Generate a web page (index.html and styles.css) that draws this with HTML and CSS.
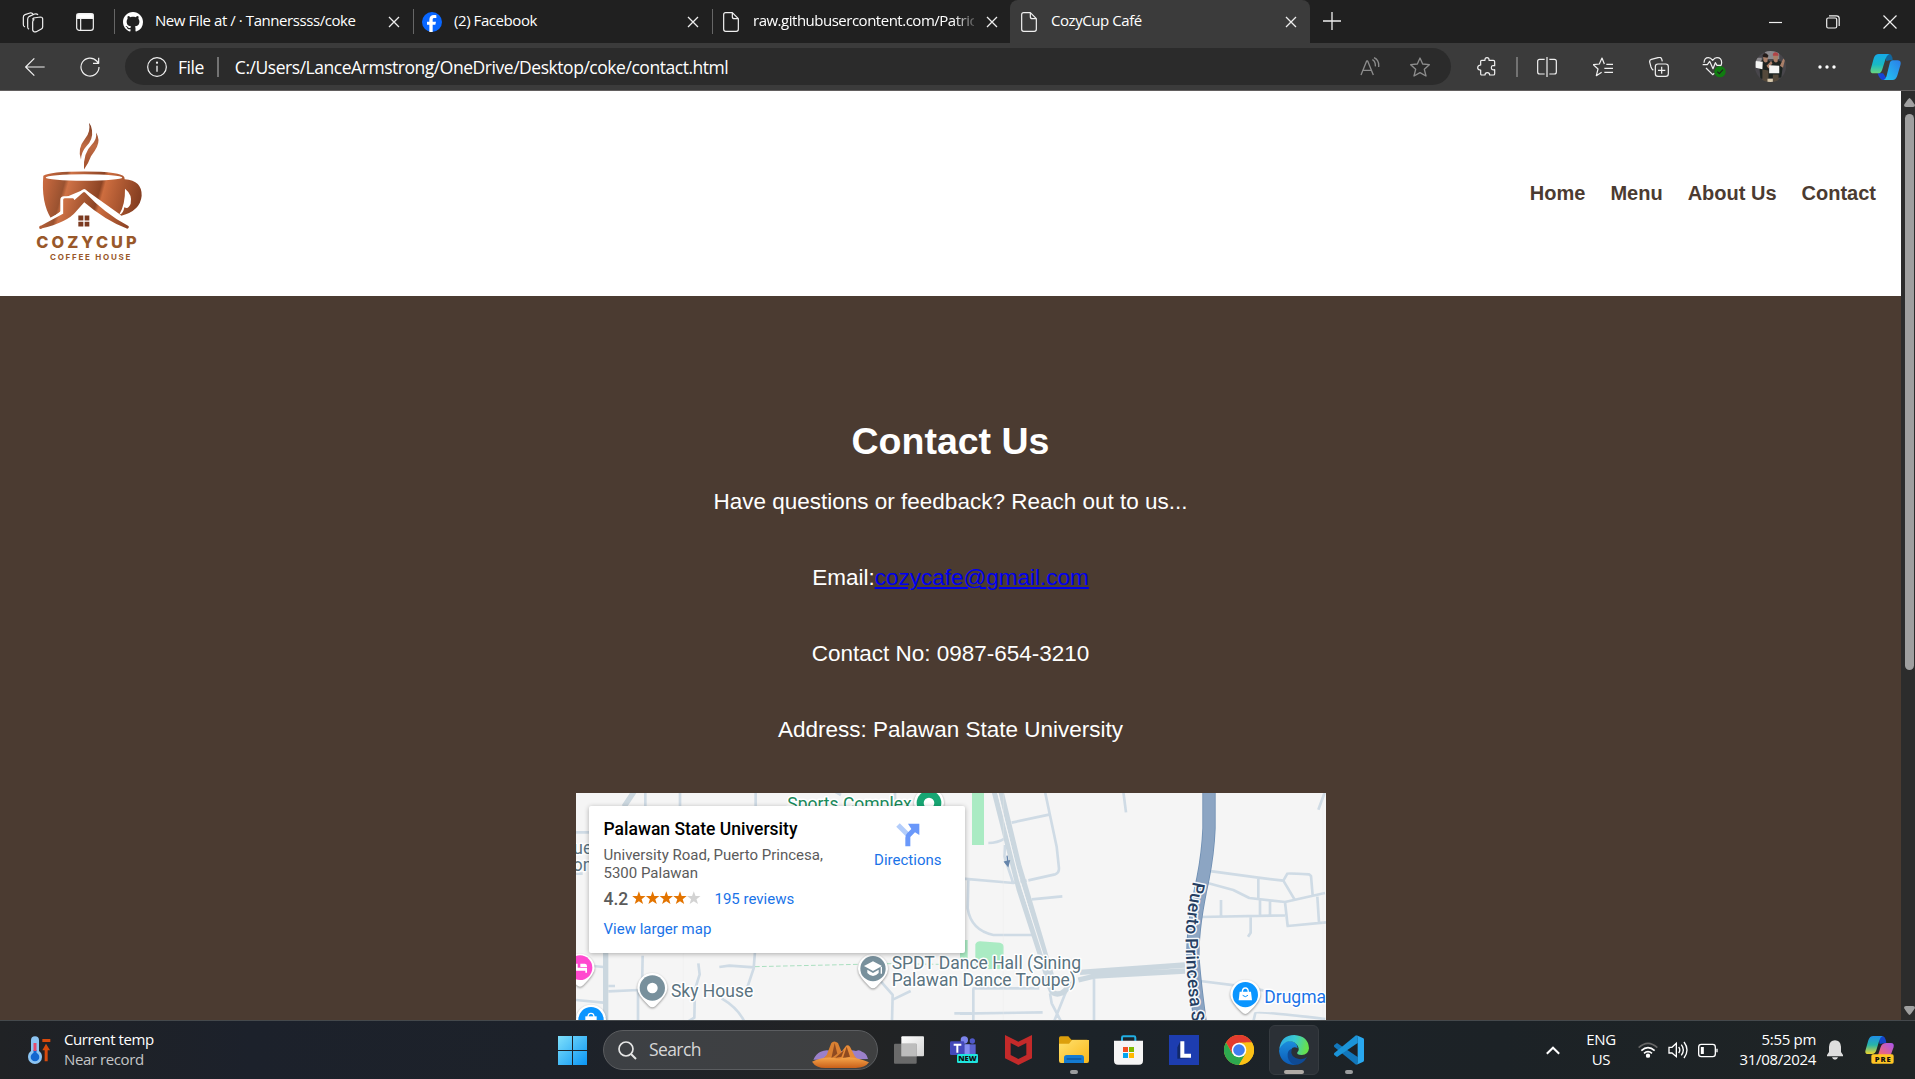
FILE: index.html
```html
<!DOCTYPE html>
<html lang="en">
<head>
<meta charset="utf-8">
<title>CozyCup Café</title>
<link rel="stylesheet" href="styles.css">
</head>
<body>
<div class="tabstrip">
  <div class="tabstrip-tools">
    <svg width="24" height="24" viewBox="62 26 72 72" class="line"><path d="M96 54l4-4 20-3q7 0 7 6v24q0 4-4 6l-15 8q-9 3-11-5V62q0-6 5-8M86 84q-5-3-4-8V54q0-6 5-9l16-7q7-2 10 3M74 77q-6-2-5-8V48q0-6 5-8l15-5q7-1 9 4"/></svg>
    <svg width="18" height="18" viewBox="0 0 54 54" class="line"><rect x="2" y="2" width="50" height="50" rx="8"/><path d="M14 17v34"/><path d="M3 3h48v13H3z" fill="#fff"/></svg>
  </div>
  <div class="tab">
    <svg class="favicon" width="20" height="20" viewBox="0 0 16 16"><path fill="#fff" d="M8 0C3.58 0 0 3.58 0 8c0 3.54 2.29 6.53 5.47 7.59.4.07.55-.17.55-.38 0-.19-.01-.82-.01-1.49-2.01.37-2.53-.49-2.69-.94-.09-.23-.48-.94-.82-1.13-.28-.15-.68-.52-.01-.53.63-.01 1.08.58 1.23.82.72 1.21 1.87.87 2.33.66.07-.52.28-.87.51-1.07-1.78-.2-3.64-.89-3.64-3.95 0-.87.31-1.59.82-2.15-.08-.2-.36-1.02.08-2.12 0 0 .67-.21 2.2.82.64-.18 1.32-.27 2-.27s1.36.09 2 .27c1.53-1.04 2.2-.82 2.2-.82.44 1.1.16 1.92.08 2.12.51.56.82 1.27.82 2.15 0 3.07-1.87 3.75-3.65 3.95.29.25.54.73.54 1.48 0 1.07-.01 1.93-.01 2.2 0 .21.15.46.55.38A8.01 8.01 0 0016 8c0-4.42-3.58-8-8-8z"/></svg>
    <span class="tab-title">New File at / · Tannerssss/coke</span>
    <svg class="tab-close" width="12" height="12" viewBox="0 0 12 12"><path d="M1 1l10 10M11 1L1 11"/></svg>
  </div>
  <div class="tab">
    <svg class="favicon" width="20" height="20" viewBox="0 0 60 60"><circle cx="30" cy="30" r="30" fill="#0866ff"/><path fill="#fff" d="M22 60V38h-7v-9h7v-5c0-10 5-15 14-15 3 0 5 0 7 1v8h-5c-5 0-6 2-6 6v5h10l-2 9h-8v22z"/></svg>
    <span class="tab-title">(2) Facebook</span>
    <svg class="tab-close" width="12" height="12" viewBox="0 0 12 12"><path d="M1 1l10 10M11 1L1 11"/></svg>
  </div>
  <div class="tab">
    <svg class="favicon line" width="20" height="20" viewBox="0 0 60 60"><path d="M14 2h20l18 18v32q0 6-6 6H14q-6 0-6-6V8q0-6 6-6zM34 2v12q0 6 6 6h12"/></svg>
    <span class="tab-title tab-title-faded">raw.githubusercontent.com/Patric</span>
    <svg class="tab-close" width="12" height="12" viewBox="0 0 12 12"><path d="M1 1l10 10M11 1L1 11"/></svg>
  </div>
  <div class="tab tab-active">
    <svg class="favicon line" width="20" height="20" viewBox="0 0 60 60"><path d="M14 2h20l18 18v32q0 6-6 6H14q-6 0-6-6V8q0-6 6-6zM34 2v12q0 6 6 6h12"/></svg>
    <span class="tab-title">CozyCup Café</span>
    <svg class="tab-close" width="12" height="12" viewBox="0 0 12 12"><path d="M1 1l10 10M11 1L1 11"/></svg>
  </div>
  <svg class="new-tab" width="18" height="18" viewBox="0 0 18 18"><path d="M9 0v18M0 9h18"/></svg>
  <div class="window-controls">
    <svg width="13" height="14" viewBox="0 0 13 14"><path d="M0 7.5h13"/></svg>
    <svg width="14" height="14" viewBox="0 0 14 14"><rect x=".7" y="3" width="10" height="10" rx="1.5"/><path d="M3 .8h7.500q2.700 0 2.700 2.700V11"/></svg>
    <svg width="14" height="14" viewBox="0 0 14 14"><path d="M.5.5l13 13M13.500.5l-13 13"/></svg>
  </div>
</div>

<div class="toolbar">
  <div class="nav-buttons">
    <svg width="20" height="20" viewBox="0 0 60 60" class="line"><path d="M59 30H3M28 4L2 30l26 26"/></svg>
    <svg width="20" height="20" viewBox="0 0 60 60" class="line"><path d="M57 30a27 27 0 1 1-7-18l5 6M56 2v17H39"/></svg>
  </div>
  <div class="address-bar">
    <svg width="20" height="20" viewBox="0 0 60 60" class="line"><circle cx="30" cy="30" r="28"/><path d="M30 26v18" stroke-width="4"/><circle cx="30" cy="17" r="1.500" fill="#fff"/></svg>
    <span class="scheme">File</span>
    <span class="divider"></span>
    <span class="url">C:/Users/LanceArmstrong/OneDrive/Desktop/coke/contact.html</span>
    <svg class="read-aloud" width="20" height="20" viewBox="0 0 60 60"><path d="M3 54L20 12h3l17 42M9 40h25M37 8q10 5 9 20M42 2q16 7 14 28"/></svg>
    <svg class="star" width="20" height="20" viewBox="0 0 60 60"><path d="M30 3l8 18 20 2-15 14 5 20-18-10-18 10 5-20L2 23l20-2z"/></svg>
  </div>
  <div class="actions">
    <svg width="20" height="20" viewBox="0 0 60 60" class="line"><path d="M14 10h10q-1-8 6-8t6 8h13q4 0 4 4v12q-10-2-10 6t10 6v12q0 4-4 4H38q0-7-7-7t-7 7H14q-3 0-3-4V39q-9 0-9-7t9-8V13q0-3 3-3z"/></svg>
    <span class="divider"></span>
    <svg width="20" height="20" viewBox="0 0 60 60" class="line"><path d="M23 7H8q-6 0-6 6v32q0 6 6 6h15M37 7h15q6 0 6 6v32q0 6-6 6H37M30 0v60"/></svg>
    <svg width="20" height="20" viewBox="0 0 60 60" class="line"><path d="M34 21l-7-18-8 18-18 2 14 13-5 20 16-10M40 22h20M34 34h26M34 46h26"/></svg>
    <svg width="20" height="20" viewBox="0 0 60 60" class="line"><rect x="19" y="21" width="39" height="37" rx="8"/><path d="M38 29v21M27 40h22M13 40Q8 36 6 30L2 15q-1-6 5-8l23-6q6-1 8 5l2 7"/></svg>
    <svg width="24" height="22" viewBox="0 0 72 66" class="line"><path d="M6 20Q7 5 19 5q7 0 13 8 6-8 13-8 14 0 14 15 0 8-6 14M12 36l20 20 5-4M2 26h14l7-10 10 22 7-18 5 8h12"/><circle cx="54" cy="47" r="17" fill="#107c10" stroke="none"/><path d="M46 47l6 6 11-12" stroke="#202020"/></svg>
    <svg width="31" height="31" viewBox="0 0 92 92"><clipPath id="avatar"><circle cx="46" cy="46" r="46"/></clipPath><g clip-path="url(#avatar)"><path fill="#48464b" d="M0 0h92v92H0z"/><path fill="#8c8a8e" d="M30 0h42v24H30zM0 20h20v14H0z"/><path fill="#1d2320" d="M12 35l18-16 16 14 14-10 24 12-6 44-62 3z"/><path fill="#a97f68" d="M24 12q9-6 15 2l-2 18q-8 6-12-3zM54 12q8-8 15 2l-2 18q-8 5-12-4zM34 44l14-14 4 6-12 16zM74 44l10-22 5 4-6 24z"/><path fill="#241c1a" d="M22 14q8-14 18 0l-3 6-13-2z"/><path fill="#b24447" d="M53 8q8-8 16 0l1 6H53z"/><path fill="#f4f5f3" d="M1 30l22 2-1 22-20-4zM42 42l30 2v22H42z"/><path fill="#54493a" d="M22 55l18 3v34H22zM53 70h17v22H53z"/><path fill="#d8c9ac" d="M37 82h16v10H37z"/></g></svg>
    <svg width="18" height="6" viewBox="0 0 18 6" fill="#fff"><circle cx="2" cy="3" r="1.700"/><circle cx="9" cy="3" r="1.700"/><circle cx="16" cy="3" r="1.700"/></svg>
    <svg width="31" height="28" viewBox="0 0 92 84"><defs><linearGradient id="cpa" x1="0" y1="0" x2="0" y2="1"><stop offset="0" stop-color="#16a9e8"/><stop offset=".55" stop-color="#18b9c4"/><stop offset="1" stop-color="#6ad67e"/></linearGradient><linearGradient id="cpb" x1="0" y1="1" x2="1" y2="0"><stop offset="0" stop-color="#22c9f2"/><stop offset="1" stop-color="#2b7de8"/></linearGradient></defs><path fill="#12669c" d="M45 3h12q8 0 11 17l-20 4z"/><path fill="#1744d4" d="M22 61h17l13 20H38q-9 0-16-20z"/><path fill="url(#cpa)" d="M26 3h31q-8 4-11 15L36 50q-3 11-13 11H10Q-2 61 2 47l9-32Q15 3 26 3z"/><path fill="url(#cpb)" d="M68 22h14q12 0 9 13l-9 31q-4 15-15 15H40q7-3 9-11l9-37q2-11 10-11z"/></svg>
  </div>
</div>

<div class="viewport">
  <div class="page">
    <header class="site-header">
      <svg class="logo" width="140" height="160" viewBox="0 10.5 420 480">
        <defs>
          <linearGradient id="cup" gradientUnits="userSpaceOnUse" x1="62" y1="250" x2="350" y2="330"><stop offset="0" stop-color="#c8693f"/><stop offset=".2" stop-color="#9a5230"/><stop offset=".24" stop-color="#cf7246"/><stop offset=".56" stop-color="#8c4424"/><stop offset=".6" stop-color="#cd6d3f"/><stop offset="1" stop-color="#7f3a1e"/></linearGradient>
          <linearGradient id="steam" x1="0" y1="0" x2="0" y2="1"><stop offset="0" stop-color="#7c3a20"/><stop offset=".5" stop-color="#c06c44"/><stop offset="1" stop-color="#a04d2a"/></linearGradient>
        </defs>
        <path fill="url(#steam)" d="M207 37q6 27-12 48-24 30-12 62 1-23 15-38 22-22 18-50-2-14-9-22zM228 66q4 19-13 37-26 25-23 74 13-18 21-40 13-17 18-28 10-22-3-43z"/>
        <path fill="url(#cup)" d="M70 196q18-13 123-13 112 0 120 17l1 6q53 4 51 50-4 45-61 60l-7-6-103-74-66 28v34l-35 26Q63 276 70 196z"/>
        <ellipse cx="192" cy="201" rx="115" ry="10" fill="#fff"/>
        <path fill="#fff" d="M315 235q23 18 17 45-7 18-19 10-3 20-15 22 18-30 17-77z"/>
        <path fill="#fff" d="M90 365l102-100 105 90z"/>
        <path id="roof" d="M60 351l72-39v-44h26v11l34-31q60 64 132 102-66-22-132-80l-28 32q-24 30-104 49z" fill="none" stroke="#fff" stroke-width="22" stroke-linejoin="round"/>
        <path d="M62 351l72-39v-44h24v11l34-30q60 64 130 101-64-24-130-81l-28 32q-24 30-102 49z" fill="url(#cup)" stroke="url(#cup)" stroke-width="9" stroke-linejoin="round"/>
        <path fill="#7b3a20" d="M175 315h15v15h-15zM194 315h14v15h-14zM175 334h15v14h-15zM194 334h14v14h-14z"/>
        <text x="49" y="413" textLength="301" class="logo-name">COZYCUP</text>
        <text x="90" y="447" textLength="241" class="logo-sub">COFFEE HOUSE</text>
      </svg>
      <nav class="site-nav"><a>Home</a><a>Menu</a><a>About Us</a><a>Contact</a></nav>
    </header>
    <main class="contact">
      <h1>Contact Us</h1>
      <p>Have questions or feedback? Reach out to us...</p>
      <p>Email:<a href="mailto:cozycafe@gmail.com">cozycafe@gmail.com</a></p>
      <p>Contact No: 0987-654-3210</p>
      <p>Address: Palawan State University</p>
      <div class="map">
        <svg width="750" height="227" viewBox="576 793 750 227">
          <path fill="#f5f5f5" d="M576 793h750v227H576z"/>
          <!-- eastern half -->
          <g transform="translate(960 785) scale(.33333)">
            <path fill="#aaebc3" d="M36 20h36v160H36zM0 465h23v55H0zM46 478q4-9 14-9l60 4q11 3 11 13v66H46z"/>
            <g class="road"><path d="M255 20l35 165 7 65q0 15-12 18l-80 18M155 113l112-24M85 174q27 0 50-14M0 280l160 14 40-7M25 285l-2 85q10 65 77 80h120M215 343l92-9M490 20l8 62M1095 20l-20 54M740 257l155 21 75 9 12-21q3-2 65 2l6 5 5 58M740 293l80 22 48 24 107 12 120-27M720 396l255-5M970 287l34 57M895 280v60M900 342v50M930 350v42M783 345v47M872 395v48l-8 12M975 351l8 72 115-11M1072 335l5 77M720 588l105 13 85 15M38 610h200M40 610v100M0 686l248-4M402 580v130M270 625l5 30 28 54M322 610l-40 100M880 710l6-26q3-6 210 18M135 180l-2 35 27 80"/></g>
            <path class="avenue" d="M103 20l75 295 67 205 25 85M123 20l53 220 67 225 35 120M360 562l315-22M355 585l50-12 270-15M267 580q0 47 25 47 28 0 40-41"/>
            <path d="M112 20l66 265 74 232" fill="none" stroke="#f5f5f5" stroke-width="3"/>
            <path d="M747 20v110q-3 75-18 150-33 150-30 240 5 70 22 195" fill="none" stroke="#6f8fb3" stroke-width="40"/>
            <path d="M747 20v110q-3 75-18 150-33 150-30 240 5 70 22 195" fill="none" stroke="#8ca5c3" stroke-width="35"/>
            <path d="M141 212l3 20M134 231l14-3-4 15z" stroke="#6685ab" stroke-width="4" fill="#6685ab"/>
            <path stroke="#e9eaec" d="M130 20v690M1089 20v690" fill="none"/>
            <path id="highway" d="M699 289Q675 400 677 480Q679 590 700 730" fill="none"/>
            <text class="highway-label"><textPath href="#highway">Puerto Princesa S</textPath></text>
          </g>
          <!-- western half -->
          <g transform="translate(570 785) scale(.33333)">
            <g class="road"><path d="M226 20v60M330 20v60M557 20v60M795 20l18 10M18 142h60M18 266h20M218 512l-2 100-12 10v90M115 619l90-4M115 603h20M70 543l30 3M18 645l82 8M385 535l4 33-14 45-2 85-20 12M448 546l30-4 75 5M555 500l-4 50-20 60M455 640q50 30 68 70M920 575l48 55-2 80M970 643l52-25M1153 685h50M975 20v30"/></g>
            <path class="avenue" d="M192 20l-30 45M107 500v210"/>
            <path d="M555 545l310-7M950 536l160 2" fill="none" stroke="#aadfc0" stroke-width="3" stroke-dasharray="14 7"/>
            <path stroke="#e9eaec" d="M340 500v220"/>
            <g class="map-label">
              <text x="652" y="76" fill="#188a5b">Sports Complex</text>
              <text x="10" y="207">ue</text><text x="8" y="258">on</text>
              <text x="303" y="636">Sky House</text>
              <text x="965" y="552">SPDT Dance Hall (Sining</text>
              <text x="965" y="604">Palawan Dance Troupe)</text>
              <text x="2083" y="654" fill="#1a73e8">Drugma</text>
            </g>
            <g class="pin"><path d="M1032 54a45 45 0 1 1 90 0q0 25-45 65-45-40-45-65z"/><path d="M-14 550a44 44 0 1 1 88 0q0 17-34 50-10 10-20 0-34-33-34-50z"/><path d="M202 609a45 45 0 1 1 90 0q0 20-35 53-10 10-20 0-35-33-35-53z"/><path d="M864 552a45 45 0 1 1 90 0q0 20-35 53-10 10-20 0-35-33-35-53z"/><path d="M18 704a45 45 0 1 1 90 0v30H18z"/><path d="M1981 629a45 45 0 1 1 90 0q0 20-35 53-10 10-20 0-35-33-35-53z"/></g>
            <circle cx="1077" cy="54" r="37" fill="#17a673"/><circle cx="1077" cy="54" r="16" fill="#fff"/>
            <circle cx="30" cy="548" r="37" fill="#ff49cf"/><path fill="#fff" d="M18 536h5v12h28v15h-5v-6H18zM31 536h14q7 1 6 10H31z"/>
            <circle cx="247" cy="609" r="38" fill="#78909c"/><circle cx="247" cy="609" r="16" fill="#fff"/>
            <circle cx="909" cy="551" r="38" fill="#78909c"/><path fill="#fff" d="M909 529l27 14-27 15-27-15zM892 554l17 10 17-10v10q-17 18-34 0zM932 546h4v20h-4z"/>
            <circle cx="63" cy="704" r="38" fill="#0a95ff"/><path fill="#fff" d="M46 694h34v24H46z"/><path d="M54 696q0-11 9-11t9 11" fill="none" stroke="#fff" stroke-width="4"/>
            <circle cx="2026" cy="629" r="38" fill="#0a95ff"/><path fill="#fff" d="M2009 620h34l3 26h-40z"/><path d="M2017 622q0-13 9-13t9 13" fill="none" stroke="#fff" stroke-width="4"/><path d="M2018 631q8 8 16 0" fill="none" stroke="#0a95ff" stroke-width="3"/>
          </g>
        </svg>
        <div class="place-card">
          <div class="place-info">
            <div class="place-name">Palawan State University</div>
            <div class="place-address">University Road, Puerto Princesa,<br>5300 Palawan</div>
            <div class="rating"><b>4.2</b>
              <svg width="69" height="14" viewBox="0 0 69 14"><defs><path id="rate" d="M6.900.3l1.700 4.700 5 .1-4 3.100 1.500 4.900-4.200-2.900-4.200 2.900 1.500-4.900-4-3.100 5-.1z"/></defs><g fill="#e37400"><use href="#rate"/><use href="#rate" x="13.700"/><use href="#rate" x="27.400"/><use href="#rate" x="41.100"/></g><use href="#rate" x="54.900" fill="#d3d3d3"/></svg>
              <a>195 reviews</a></div>
            <div class="larger-map">View larger map</div>
          </div>
          <div class="directions">
            <svg width="24" height="24" viewBox="0 0 72 72"><path d="M6 6l30 30" stroke="#b3cdfb" stroke-width="15"/><path fill="#6a98fa" d="M28 70V44q0-8 6-14l12-12L36 2h34v34L57 28 43 42v28z"/></svg>
            <span>Directions</span>
          </div>
        </div>
      </div>
    </main>
  </div>
  <div class="scrollbar">
    <svg width="11" height="9" viewBox="0 0 11 9"><path d="M5.500 0Q6.500 0 11 7q0 2-2 2H2Q0 9 0 7 4.500 0 5.500 0z"/></svg>
    <div class="thumb"></div>
    <svg class="down" width="11" height="9" viewBox="0 0 11 9"><path d="M5.500 9Q6.500 9 11 2q0-2-2-2H2Q0 0 0 2 4.500 9 5.500 9z"/></svg>
  </div>
</div>

<div class="taskbar">
  <div class="weather">
    <svg width="23" height="29" viewBox="0 0 69 87"><path fill="#8cc4f2" d="M9 13a12 12 0 0 1 24 0v32q9 6 9 18a21 21 0 0 1-42 0q0-12 9-18z"/><circle cx="21" cy="63" r="13" fill="#1267cf"/><path stroke="#1267cf" stroke-width="9" d="M21 62V42"/><path stroke="#e5486b" stroke-width="9" d="M21 45V21"/><path fill="#d84a0c" d="M43 9h24v9H43zM54 23l12 20h-7v33h-9V43h-7z"/></svg>
    <div class="weather-text"><div>Current temp</div><div class="weather-note">Near record</div></div>
  </div>
  <div class="cell"><svg width="29" height="29" viewBox="0 0 87 87"><defs><linearGradient id="win" x1="0" y1="0" x2="87" y2="87" gradientUnits="userSpaceOnUse"><stop offset="0" stop-color="#7fe0fb"/><stop offset="1" stop-color="#0a95f4"/></linearGradient></defs><path fill="url(#win)" d="M0 0h42v42H0zM45 0h42v42H45zM0 45h42v42H0zM45 45h42v42H45z"/></svg></div>
  <div class="search">
    <svg width="19" height="19" viewBox="0 0 57 57" fill="none" stroke="#e6e6e6" stroke-width="5"><circle cx="24" cy="24" r="21"/><path d="M39 39l15 15" stroke-width="6"/></svg>
    <span>Search</span>
    <svg class="buttes" width="57" height="27" viewBox="0 0 171 81"><defs><linearGradient id="sand" x1="0" y1="0" x2="0" y2="1"><stop offset="0" stop-color="#f6a54a"/><stop offset="1" stop-color="#c9601a"/></linearGradient></defs><path fill="#9b80c9" d="M4 56q8-18 22-24 16-8 32-2h48q12-5 26 0 10-6 18 2 14 4 18 22z"/><path fill="#d98032" d="M30 56l14-14 14-36q8-9 20 0l20 50z"/><path fill="#e78b38" d="M72 55l28-38q6-8 14 0l14 28 10 12z"/><path fill="#8f4a20" d="M68 6l8 32-18 14zM104 17l10 30-22 6zM70 50l26-22-8 20z"/><path fill="url(#sand)" d="M0 62q45-20 80-8 40-12 91 10-12 17-40 17H40Q12 81 0 62z"/></svg>
  </div>
  <div class="cell"><svg width="30" height="28" viewBox="0 0 90 84"><defs><linearGradient id="tv" x1="0" y1="0" x2="1" y2="1"><stop offset="0" stop-color="#fff"/><stop offset="1" stop-color="#d4d4d4"/></linearGradient></defs><rect x="22" y="1" width="68" height="60" rx="3" fill="url(#tv)"/><rect y="23" width="68" height="60" rx="3" fill="#777" opacity=".85"/><path fill="#bdbdbd" d="M22 23h46v38H22z"/></svg></div>
  <div class="cell"><svg width="28" height="28" viewBox="0 0 84 84"><circle cx="43" cy="12" r="11" fill="#7b83eb"/><circle cx="67" cy="15" r="8" fill="#5059c9"/><path fill="#5b62cf" d="M43 25h34v34H43z"/><path fill="#868ef0" d="M43 25h16v34H43z"/><rect y="16" width="43" height="41" rx="4" fill="#4448ba"/><path stroke="#fff" stroke-width="6" d="M11 26h23M22 26v24"/><rect x="21" y="54" width="63" height="27" rx="4" fill="#1fe5df"/><text x="25" y="75" textLength="55" class="badge-text">NEW</text></svg></div>
  <div class="cell"><svg width="27" height="30" viewBox="0 0 81 90"><path fill="#c42a2a" d="M0 0l40 20L81 0v70L40 90 0 70z"/><path fill="#1c2228" d="M17 24l23 12 24-12v36L40 72 17 60z"/></svg></div>
  <div class="cell running"><svg width="30" height="28" viewBox="0 0 90 84"><defs><linearGradient id="fold" x1="0" y1="0" x2="1" y2="1"><stop offset="0" stop-color="#ffe16e"/><stop offset="1" stop-color="#f8b71a"/></linearGradient></defs><path fill="#dc9f0c" d="M0 6q0-5 5-5h23l9 10h48v20H0z"/><path fill="url(#fold)" d="M0 23h30l9-11h51v62q0 7-6 7H6q-6 0-6-7z"/><path fill="#147bd1" d="M15 81V65q0-8 8-8h44q8 0 8 8v16z"/><path stroke="#0b549b" stroke-width="4" d="M23 69h44"/></svg></div>
  <div class="cell"><svg width="29" height="30" viewBox="0 0 87 90"><path d="M24 20V8q0-4 4-4h32q4 0 4 4v12" fill="none" stroke="#21afe3" stroke-width="6"/><path fill="#f5f5f5" d="M0 17h87v60q0 12-12 12H12Q0 89 0 77z"/><path fill="#f25022" d="M27 36h15v15H27z"/><path fill="#7fba00" d="M45 36h15v15H45z"/><path fill="#00a4ef" d="M27 54h15v15H27z"/><path fill="#ffb900" d="M45 54h15v15H45z"/></svg></div>
  <div class="cell"><svg width="30" height="30" viewBox="0 0 90 90"><path fill="#1d3db0" d="M0 0h90v90H0z"/><path fill="#122968" d="M25 37l9-18v50l31-13-6 14-34 1z"/><path stroke="#fff" stroke-width="12" fill="none" d="M40 19v43h26"/></svg></div>
  <div class="cell"><svg width="30" height="30" viewBox="0 0 90 90"><circle cx="45" cy="45" r="45" fill="#fbc116"/><path fill="#e33b2e" d="M6 22.500A45 45 0 0 1 84 22.500H45L25 56z"/><path fill="#2da94f" d="M6 22.500A45 45 0 0 0 45 90l20-34-40 0z"/><path fill="#fbc116" d="M84 22.500A45 45 0 0 1 45 90l20-34V22.500z"/><circle cx="45" cy="45" r="22" fill="#fff"/><circle cx="45" cy="45" r="17.500" fill="#3f7ef0"/></svg></div>
  <div class="cell"><div class="tile running"><svg width="30" height="30" viewBox="0 0 90 90"><defs><linearGradient id="ea" x1="0" y1="0" x2="1" y2=".2"><stop offset="0" stop-color="#2ba7e8"/><stop offset=".55" stop-color="#3bcbd0"/><stop offset="1" stop-color="#66e04e"/></linearGradient><linearGradient id="eb" x1="0" y1="0" x2="0" y2="1"><stop offset="0" stop-color="#1b8ede"/><stop offset="1" stop-color="#0c5ab5"/></linearGradient></defs><path fill="url(#eb)" d="M2 38Q10 18 32 18q22 1 24 22-13-8-20 4-8 26 20 36-5 9-12 10Q5 87 0 48z"/><path fill="#0f4a94" d="M38 42q-6 24 22 30 15 2 24-6-13 24-38 24-23-12-20-34 2-12 12-14z"/><path fill="url(#ea)" d="M1 42Q6 0 46 0q42 3 44 40-2 20-22 20-16 0-13-8 8-8 1-20Q46 18 30 19 12 22 1 42z"/></svg></div></div>
  <div class="cell running"><svg width="30" height="30" viewBox="0 0 90 90"><path fill="#1277bb" d="M9 24L1 30q-2 3 0 6l65 53 5-3V66z"/><path fill="#1b94d8" d="M9 66l-8-6q-2-3 0-6L66 1l5 3v20z"/><path fill="#29a8ef" d="M66 0l22 10q2 1 2 4v62q0 3-2 4L66 90q5-2 5-8V8q0-6-5-8z"/></svg></div>
  <div class="tray">
    <svg width="14" height="9" viewBox="0 0 14 9" fill="none" stroke="#fff" stroke-width="2"><path d="M.8 7.800L7 1.700l6.200 6.100"/></svg>
    <div class="lang">ENG<br>US</div>
    <svg width="20" height="16" viewBox="0 0 60 48" fill="none" stroke="#fff" stroke-width="5"><path d="M2 17Q30-9 58 17" stroke="#666" /><path d="M10 26q20-18 40 0M18 34q12-10 24 0"/><circle cx="30" cy="41" r="4" fill="#fff"/></svg>
    <svg width="21" height="18" viewBox="0 0 63 54" fill="none" stroke="#fff" stroke-width="4"><path d="M3 19h9L25 7v40L12 36H3zM32 18q7 9 0 18M40 11q12 16 0 32M48 3q18 24 0 48"/></svg>
    <svg width="20" height="15" viewBox="0 0 60 45" fill="none" stroke="#fff" stroke-width="4"><rect x="2" y="4" width="50" height="37" rx="8"/><path d="M57 17v11"/><path d="M13 12v21" stroke-width="9"/></svg>
    <div class="clock">5:55 pm<br>31/08/2024</div>
    <svg width="16" height="20" viewBox="0 0 48 60" fill="#dedede"><path d="M6 20Q8 1 24 1t18 19v16l6 9v4H0v-4l6-9zM15 52h18q-2 7-9 7t-9-7z"/></svg>
    <svg width="30" height="30" viewBox="0 0 90 90"><defs><linearGradient id="pa" x1="0" y1="0" x2="0" y2="1"><stop offset="0" stop-color="#1f8fe8"/><stop offset=".5" stop-color="#27b5a8"/><stop offset="1" stop-color="#eed52b"/></linearGradient><linearGradient id="pb" x1="0" y1="1" x2="1" y2="0"><stop offset="0" stop-color="#ff6b5c"/><stop offset="1" stop-color="#a855f0"/></linearGradient></defs><path fill="#1346c9" d="M40 3h12q9 0 12 20l-20 4z"/><path fill="url(#pa)" d="M25 3h28q-7 3-10 13l-9 30q-3 11-13 11H9Q-2 57 2 44l8-28Q14 3 25 3z"/><path fill="url(#pb)" d="M64 24h14q10 0 8 12L76 64H38l9-28q4-12 17-12z"/><rect x="19" y="58" width="67" height="28" rx="5" fill="#ffc524"/><text x="29" y="80" textLength="48" class="badge-text">PRE</text></svg>
  </div>
</div>
</body>
</html>
```
FILE: styles.css
```css
* { box-sizing: border-box; }

body {
  margin: 0;
  width: 1915px;
  height: 1079px;
  overflow: hidden;
  display: flex;
  flex-direction: column;
  font-family: "Open Sans", "Noto Sans", sans-serif;
  font-size: 15px;
  color: #fff;
  background: #202020;
}

svg { display: block; flex: none; }
.line { fill: none; stroke: #f0f0f0; stroke-width: 3.6; stroke-linejoin: round; }

/* tabs */
.tabstrip {
  display: flex;
  align-items: stretch;
  height: 43px;
  background: #202020;
}
.tabstrip-tools {
  width: 114px;
  display: flex;
  align-items: center;
  padding-left: 21px;
  gap: 31px;
}
.tab {
  width: 299px;
  display: flex;
  align-items: center;
  gap: 12px;
  padding: 1px 13px 0 9px;
  background: linear-gradient(#666, #666) 0 9px / 1px 25px no-repeat;
}
.tab-title {
  flex: 1;
  white-space: nowrap;
  overflow: hidden;
  letter-spacing: -0.43px;
  line-height: 20px;
  margin-top: -5px;
}
.tab-title-faded {
  letter-spacing: -0.49px;
  mask-image: linear-gradient(to right, #000 200px, transparent 228px);
}
.tab-close { stroke: #eee; stroke-width: 1.3; }
.tab-active {
  width: 300px;
  margin-left: -1px;
  padding-left: 9px;
  background: #3b3b3b;
  border-radius: 8px 8px 0 0;
}
.new-tab { align-self: center; margin: -2px 0 0 13px; stroke: #eee; stroke-width: 1.3; }
.window-controls {
  margin-left: auto;
  display: grid;
  grid-template-columns: 57px 57px 57px;
  margin-right: -4px;
  place-items: center;
  fill: none;
  stroke: #f0f0f0;
  stroke-width: 1.2;
  transform: translateX(-1px);
}

/* toolbar */
.toolbar {
  display: flex;
  align-items: center;
  height: 48px;
  background: #3b3b3b;
  border-bottom: 1px solid #625f5f;
}
.nav-buttons {
  width: 125px;
  display: flex;
  gap: 35px;
  padding-left: 25px;
}
.address-bar {
  width: 1326px;
  height: 37px;
  display: flex;
  align-items: center;
  padding: 0 21px 0 22px;
  border-radius: 19px;
  background: #2b2b2b;
  font-size: 17.5px;
  letter-spacing: -0.46px;
}
.scheme { margin-left: 11px; line-height: 24px; }
.divider { width: 2px; height: 20px; background: #737373; }
.address-bar .divider { margin: 0 16px 0 13px; }
.url { line-height: 24px; }
.read-aloud { margin-left: auto; margin-right: 30px; }
.read-aloud, .star { fill: none; stroke: #8c8c8c; stroke-width: 4; stroke-linejoin: round; }
.actions {
  flex: none;
  width: 456px;
  margin-left: 8px;
  display: grid;
  grid-template-columns: 56px 4px 56px 56px 55px 56px 56px 57px 60px;
  place-items: center;
}

/* page */
.viewport { flex: 1; display: flex; min-height: 0; }
.page {
  width: 1901px;
  overflow: hidden;
  background: #4b3b31;
  font-family: "Liberation Sans", Arial, sans-serif;
}
.site-header {
  height: 205px;
  display: flex;
  align-items: center;
  justify-content: space-between;
  padding: 0 25px 0 20px;
  background: #fff;
}
.logo-name { font: 800 49px Inter, sans-serif; fill: #99582a; }
.logo-sub { font: 700 24px Inter, sans-serif; fill: #99582a; }
.site-nav {
  display: flex;
  gap: 25px;
  font-size: 20px;
  font-weight: bold;
  color: #4b3b31;
}
.contact {
  display: flex;
  flex-direction: column;
  align-items: center;
  padding-top: 124px;
}
.contact h1 { margin: 0 0 26px; font-size: 37.5px; line-height: 43px; }
.contact p { margin: 0 0 50px; font-size: 22.5px; line-height: 26px; }
.contact p a { color: #00e; }

/* map */
.map { position: relative; width: 750px; height: 227px; overflow: hidden; }
.road { fill: none; stroke: #cfdbe5; stroke-width: 8; stroke-linejoin: round; }
.avenue { fill: none; stroke: #cbd7df; stroke-width: 16; stroke-linejoin: round; }
.map-label { font: 52.5px Roboto, sans-serif; fill: #5a7380; stroke: #fff; stroke-width: 9; stroke-linejoin: round; paint-order: stroke; }
.highway-label { font: 500 52.5px Roboto, sans-serif; letter-spacing: .3px; fill: #253e62; stroke: #f5f8fc; stroke-width: 9; stroke-linejoin: round; paint-order: stroke; }
.pin { fill: #fff; filter: drop-shadow(0 3px 3px rgba(0, 0, 0, .4)); }
.place-card {
  position: absolute;
  left: 13px;
  top: 13px;
  width: 376px;
  height: 147px;
  display: flex;
  justify-content: space-between;
  padding: 13px 23px 0 15px;
  border-radius: 2px;
  background: #fff;
  box-shadow: 0 1px 5px rgba(0, 0, 0, .3);
  font: 15px/17.6px Roboto, sans-serif;
  color: #5b5b5b;
}
.place-name { font-size: 17.5px; font-weight: 500; line-height: 20px; color: #000; }
.place-address { margin-top: 8px; }
.rating { display: flex; align-items: center; margin-top: 6px; line-height: 20px; }
.rating b { width: 28px; font-size: 17.5px; font-weight: 500; }
.rating svg { margin-top: -1px; }
.rating a { margin: 1px 0 0 14px; }
.rating a, .larger-map, .directions { color: #1a73e8; }
.larger-map { margin-top: 11px; line-height: 18px; }
.directions { display: flex; flex-direction: column; align-items: center; gap: 5px; padding-top: 4px; }

.scrollbar {
  flex: 1;
  display: flex;
  flex-direction: column;
  align-items: center;
  padding: 7px 0 5px 3px;
  background: #2c2c2c;
  fill: #a0a0a0;
}
.thumb { width: 9px; height: 556px; margin-top: 7px; border-radius: 5px; background: #9f9f9f; }
.down { margin-top: auto; }

/* taskbar */
.taskbar {
  display: flex;
  align-items: center;
  height: 59px;
  border-top: 1px solid #45494c;
  background: linear-gradient(90deg, #202225 0, #1c212b 250px, #1d222a 560px, #222324 850px, #1c2329 1080px, #1c2226 1500px, #1f2425 1915px);
}
.weather {
  width: 545px;
  display: flex;
  align-items: center;
  gap: 12px;
  padding-left: 28px;
  line-height: 20px;
  letter-spacing: -0.4px;
}
.weather-text { padding: 0 0 3px 1px; }
.weather-note { color: #c4c5c6; }
.cell { position: relative; width: 55px; height: 58px; display: grid; place-items: center; flex: none; }
.search {
  width: 275px;
  height: 40px;
  flex: none;
  margin: 0 3px;
  display: flex;
  align-items: center;
  padding: 0 8px 0 14px;
  border: 1px solid #5b5d60;
  border-radius: 20px;
  background: linear-gradient(90deg, #3d4044, #3f4041);
  font-size: 17.5px;
  letter-spacing: -0.6px;
  color: #d6d6d6;
}
.search span { margin: -2px 0 0 12px; }
.buttes { margin-left: auto; margin-top: 8px; }
.badge-text { font: 800 23px "Open Sans", sans-serif; fill: #111; }
.tile {
  position: relative;
  width: 50px;
  height: 50px;
  display: grid;
  place-items: center;
  border: 1px solid #363b40;
  border-radius: 6px;
  background: #2b3036;
}
.running::after {
  content: "";
  position: absolute;
  left: 50%;
  bottom: 5px;
  width: 8px;
  height: 4px;
  margin-left: -4px;
  border-radius: 2px;
  background: #9a9c9e;
}
.tile.running::after { bottom: 0; width: 20px; margin-left: -10px; background: #b0aba6; }
.tray {
  margin-left: auto;
  display: grid;
  grid-template-columns: 32px 64px 30px 30px 30px 102px 20px 70px;
  place-items: center;
  line-height: 20px;
  letter-spacing: -0.3px;
}
.lang { text-align: center; padding-bottom: 2px; }
.clock { justify-self: end; text-align: right; white-space: nowrap; padding: 0 9px 3px 0; }
```
